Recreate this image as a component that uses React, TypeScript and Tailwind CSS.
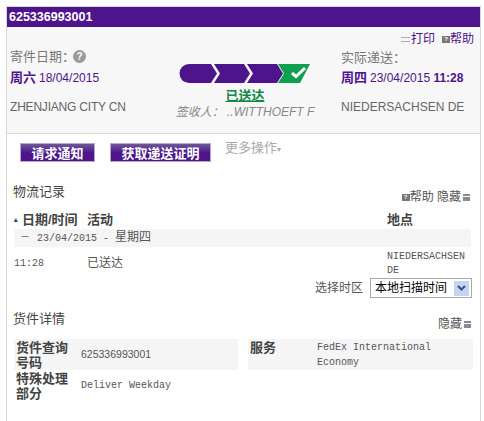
const sans = "font-['Liberation_Sans','Noto_Sans_CJK_SC',sans-serif]";
const mono = "font-['Liberation_Mono','Noto_Sans_CJK_SC',monospace]";

function HelpIcon() {
  return (
    <span className="inline-flex h-[7px] w-[8px] items-center justify-center bg-[#777] text-[6px] font-bold leading-none text-white">
      ?
    </span>
  );
}

function HideIcon() {
  return (
    <span className="ml-[2px] inline-flex h-[7px] w-[7px] flex-col bg-[#8a8a96] pt-[2px]">
      <span className="h-[1px] bg-white" />
    </span>
  );
}

function ProgressBar() {
  return (
    <svg width="132" height="19" viewBox="-1 0 132 19">
      <path d="M9 0H31L37 9.5L31 19H9A9 9 0 0 1 9 0Z" fill="#4d148c" />
      <path d="M34 0H64L70 9.5L64 19H34L40 9.5Z" fill="#4d148c" />
      <path d="M67 0H97L103 9.5L97 19H67L73 9.5Z" fill="#4d148c" />
      <path d="M98 0H130L120 19H98L104 9.5Z" fill="#0ea04f" />
      <path d="M112 9L116 12.5L125 4" fill="none" stroke="#fff" strokeWidth="3" />
    </svg>
  );
}

function Button({ label, width }: { label: string; width: string }) {
  return (
    <div
      className={`flex h-[19px] items-end justify-center border border-[#b9a6cf] bg-gradient-to-b from-[#6f5596] via-[#4d148c] to-[#4d148c] ${width}`}
    >
      <span className="text-[13px] font-bold leading-[14px] text-white">{label}</span>
    </div>
  );
}

export default function App() {
  return (
    <div className={`h-[421px] w-[484px] overflow-hidden bg-white pl-[6px] pr-[3px] pt-[6px] text-[#555] ${sans}`}>
      <div className="h-[415px] border-x border-t border-[#d8d8d8]">
        <div className="flex h-[20px] items-center bg-[#4d148c] pl-[2px] text-[12.5px] font-bold text-white">
          625336993001
        </div>

        {/* Summary */}
        <div className="grid h-[107px] grid-cols-[164px_142px_1fr] border-b border-[#d8d8d8] bg-[#f7f7f7] pl-[3px]">
          <div className="pt-[21px]">
            <div className="flex h-[17px] items-center text-[13px] text-[#777]">
              寄件日期：
              <span className="ml-[-2px] flex h-[13px] w-[13px] items-center justify-center rounded-full bg-[#9a9a9a] text-[10px] font-bold text-white">
                ?
              </span>
            </div>
            <div className="mt-[6px] text-[12px] leading-[14px] text-[#4d148c]">
              <b className="mr-[3px] text-[13px]">周六</b>18/04/2015
            </div>
            <div className="mt-[15px] text-[12px] leading-[14px] tracking-[-0.2px] text-[#666]">ZHENJIANG CITY CN</div>
          </div>

          <div className="flex flex-col items-center pt-[37px]">
            <ProgressBar />
            <div className="mt-[5px] text-[13px] font-bold leading-[15px] text-[#0e8a43] underline">已送达</div>
            <div className="mt-[2px] whitespace-nowrap text-[12px] italic leading-[14px] text-[#888]">
              签收人： ..WITTHOEFT F
            </div>
          </div>

          <div className="pl-[25px] pt-[5px]">
            <div className="flex h-[14px] items-center justify-end gap-[7px] pr-[6px] text-[12px] text-[#4d148c]">
              <span className="flex items-center gap-[1px]">
                <span className="h-[5px] w-[9px] border-y border-[#aab]" />
                打印
              </span>
              <span className="flex items-center">
                <HelpIcon />
                帮助
              </span>
            </div>
            <div className="mt-[4px] h-[16px] text-[13px] leading-[16px] text-[#777]">实际递送：</div>
            <div className="mt-[5px] whitespace-nowrap text-[12px] font-bold leading-[14px] text-[#4d148c]">
              <span className="mr-[3px] text-[13px]">周四</span>
              <span className="font-normal">23/04/2015</span> 11:28
            </div>
            <div className="mt-[15px] text-[12px] leading-[14px] text-[#666]">NIEDERSACHSEN DE</div>
          </div>
        </div>

        {/* Actions */}
        <div className="flex items-start pl-[13px] pt-[9px]">
          <Button label="请求通知" width="w-[75px]" />
          <div className="w-[15px]" />
          <Button label="获取递送证明" width="w-[101px]" />
          <div className="-mt-[3px] ml-[14px] whitespace-nowrap text-[13px] leading-[16px] text-[#aaa]">
            更多操作<span className="text-[8px]">▾</span>
          </div>
        </div>

        {/* Travel history */}
        <div className="pl-[6px] pr-[8px]">
          <div className="mt-[22px] flex h-[27px] items-start justify-between">
            <span className="text-[13px] leading-[16px] text-[#444]">物流记录</span>
            <span className="mt-[5px] flex items-center pr-[2px] text-[12px] leading-[16px]">
              <HelpIcon />
              帮助 隐藏
              <HideIcon />
            </span>
          </div>

          <div className="ml-[1px] grid h-[18px] grid-cols-[73px_300px_1fr] items-start text-[13px] leading-[17px] font-bold text-[#444]">
            <span className="flex items-center whitespace-nowrap">
              <span className="w-[8px] text-[7px]">▴</span>日期/时间
            </span>
            <span>活动</span>
            <span>地点</span>
          </div>

          <div className={`ml-[1px] mr-[1px] flex h-[18px] items-center bg-[#f5f5f5] pl-[7px] text-[10px] ${mono}`}>
            <span className="w-[16px] text-[8px]">一</span>
            23/04/2015
            <span className="mx-[6px]">-</span>
            <span className="text-[12px]">星期四</span>
          </div>

          <div className={`ml-[1px] grid grid-cols-[73px_300px_1fr] text-[10px] leading-[14px] ${mono}`}>
            <span className="pt-[10px]">11:28</span>
            <span className="pt-[10px] text-[12px]">已送达</span>
            <span className="break-all pt-[3px]">NIEDERSACHSEN DE</span>
          </div>

          <div className="flex h-[20px] items-center justify-end gap-[7px] text-[12px]">
            选择时区
            <div className="flex h-[20px] w-[102px] items-center justify-between border border-[#aaa] bg-white pl-[4px] pr-[2px] text-black">
              本地扫描时间
              <span className="flex h-[15px] w-[15px] items-center justify-center bg-[#c3d5f0]">
                <svg width="9" height="6" viewBox="0 0 9 6">
                  <path d="M1 1L4.5 4.5L8 1" fill="none" stroke="#34508a" strokeWidth="2" />
                </svg>
              </span>
            </div>
          </div>

          {/* Shipment facts */}
          <div className="mt-[13px] flex h-[28px] items-start justify-between">
            <span className="text-[13px] leading-[16px] text-[#444]">货件详情</span>
            <span className="mt-[5px] flex items-center pr-[1px] text-[12px] leading-[16px]">
              隐藏
              <HideIcon />
            </span>
          </div>

          <div className="grid grid-cols-[224px_225px] gap-x-[10px] pl-[1px]">
            <div className="grid h-[31px] grid-cols-[65px_1fr] items-center bg-[#f5f5f5] pl-[2px]">
              <span className="w-[53px] text-[13px] font-bold leading-[15px] text-[#444]">货件查询号码</span>
              <span className="text-[10.5px]">625336993001</span>
            </div>
            <div className={`grid h-[31px] grid-cols-[67px_1fr] items-start bg-[#f5f5f5] pl-[2px] pt-[1px] text-[10px] leading-[15px] ${mono}`}>
              <span className={`text-[13px] font-bold text-[#444] ${sans}`}>服务</span>
              <span>FedEx International Economy</span>
            </div>
            <div className="grid h-[31px] grid-cols-[65px_1fr] items-center pl-[2px]">
              <span className="w-[53px] text-[13px] font-bold leading-[15px] text-[#444]">特殊处理部分</span>
              <span className={`text-[10px] ${mono}`}>Deliver Weekday</span>
            </div>
          </div>
        </div>
      </div>
    </div>
  );
}
